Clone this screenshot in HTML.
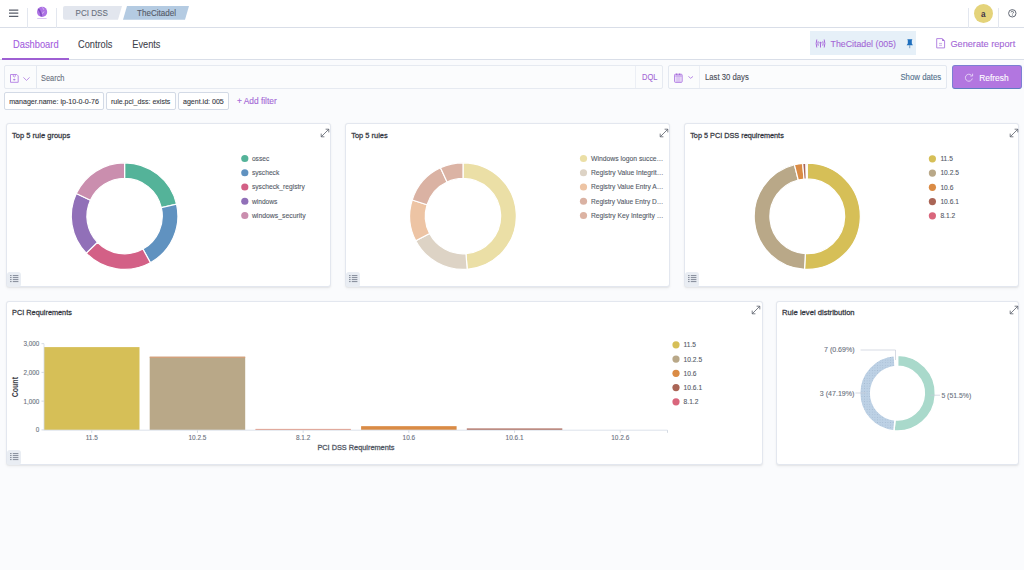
<!DOCTYPE html>
<html><head><meta charset="utf-8">
<style>
*{box-sizing:border-box;margin:0;padding:0}
html,body{width:1024px;height:570px;overflow:hidden;background:#fafbfd;font-family:"Liberation Sans", sans-serif;color:#343741}
.abs{position:absolute}
#hdr{position:absolute;left:0;top:0;width:1024px;height:28px;background:#fff;border-bottom:1px solid #d9dee8}
#tabs{position:absolute;left:0;top:28px;width:1024px;height:32px;background:#fff;border-bottom:1px solid #d9dee8}
.panel{position:absolute;background:#fff;border:1px solid #e3e7ef;border-radius:3px;box-shadow:0 0.6px 1.2px rgba(0,0,0,0.05),0 1.5px 3px rgba(0,0,0,0.04)}
.lbtn{position:absolute;width:14.5px;height:14.5px;background:#e9edf3;border-radius:3px}
.pill{position:absolute;top:92px;height:18px;background:#fff;border:1px solid #d3dae6;border-radius:2px}
svg{overflow:visible}
#ov{position:absolute;left:0;top:0}
#ov text{font-family:"Liberation Sans", sans-serif}
</style></head><body>
<div id="hdr">
  <svg class="abs" style="left:8.8px;top:8.6px" width="10" height="9" viewBox="0 0 10 9"><path d="M0 1h9.3M0 4.2h9.3M0 7.3h9.3" stroke="#5a5f6b" stroke-width="1.25"/></svg>
  <div class="abs" style="left:27px;top:8px;width:1px;height:20px;background:#e3e7ef"></div>
  <svg class="abs" style="left:36px;top:6px" width="12" height="14" viewBox="0 0 12 14"><circle cx="6.1" cy="5.9" r="5.1" fill="#ad72e4"/><path d="M2.2 3.2q1.5 1.2 2.4 3.5t0.4 3.5" stroke="#7f4cc0" stroke-width="1.6" fill="none"/><path d="M6.3 1.5q1.2 0.8 1.5 2.2M8 5.5q-0.5 1.5 -2 2" stroke="#d9c2f3" stroke-width="0.9" fill="none"/><rect x="1.2" y="12.1" width="9.4" height="0.8" fill="#d2b8f0"/></svg>
  <div class="abs" style="left:56px;top:8px;width:1px;height:20px;background:#e3e7ef"></div>
  <svg class="abs" style="left:62px;top:6px" width="130" height="14" viewBox="0 0 130 14"><path d="M3 0H60L56 13.8H3A2 2 0 0 1 1 11.8V2A2 2 0 0 1 3 0Z" fill="#e2e6ee"/><path d="M65 0H127L123 13.8H61Z" fill="#b4cbe2"/></svg>
  <div class="abs" style="left:968px;top:8px;width:1px;height:20px;background:#e3e7ef"></div>
  <div class="abs" style="left:973.8px;top:3.6px;width:19px;height:19px;border-radius:50%;background:#e4d37a"></div>
  <div class="abs" style="left:997.5px;top:8px;width:1px;height:20px;background:#e3e7ef"></div>
  <svg class="abs" style="left:1007.5px;top:8.7px" width="9" height="9" viewBox="0 0 9 9"><circle cx="4.3" cy="4.3" r="3.7" fill="none" stroke="#535966" stroke-width="0.9"/><path d="M3.1 3.4a1.2 1.2 0 1 1 1.7 1.1c-.4.2-.5.5-.5.9" fill="none" stroke="#535966" stroke-width="0.8"/><circle cx="4.3" cy="6.5" r="0.45" fill="#535966"/></svg>
</div>
<div id="tabs">
  <div class="abs" style="left:2px;top:30px;width:67px;height:2px;background:#9e5fd3"></div>
  <div class="abs" style="left:810px;top:3px;width:106px;height:24px;background:#e6f0f8"></div>
  <svg class="abs" style="left:814.5px;top:10.5px" width="11" height="9" viewBox="0 0 11 9"><path d="M1.8 0.5q-1.3 4 0 8M3.2 2.3q-0.6 2.2 0 4.4M9.2 0.5q1.3 4 0 8M7.8 2.3q0.6 2.2 0 4.4M5.5 4.5v4" stroke="#a86cdb" stroke-width="1" fill="none"/><circle cx="5.5" cy="3.8" r="1.1" fill="#a86cdb"/></svg>
  <svg class="abs" style="left:906px;top:10.5px" width="8" height="10" viewBox="0 0 8 10"><path d="M1.3 0.3H6.4L5.8 1.6V4.6L6.9 6.3H0.6L1.8 4.6V1.6Z" fill="#1f6fbd"/><path d="M3.75 6.2v3" stroke="#5b86b3" stroke-width="0.8"/></svg>
  <svg class="abs" style="left:936px;top:10px" width="10" height="11" viewBox="0 0 10 11"><path d="M0.7 0.6H6.3L8.6 2.9V9.9H0.7Z" fill="none" stroke="#b07fe0" stroke-width="0.95"/><path d="M6.2 0.6L8.6 3H6.2Z" fill="#a366d6"/><path d="M3 5.4h3M3 7.3h3" stroke="#b58ae0" stroke-width="0.7"/></svg>
</div>
<div class="abs" style="left:4px;top:65px;width:659px;height:24px;background:#fbfcfd;border:1px solid #e6eaf1;border-radius:2px"></div>
<div class="abs" style="left:36px;top:66px;width:1px;height:22px;background:#e3e8f0"></div>
<svg class="abs" style="left:10.2px;top:74px" width="9" height="9" viewBox="0 0 9 9"><path d="M0.5 0.5H6.8L8.2 1.9V8.3H0.5Z" fill="none" stroke="#b27fe3" stroke-width="0.9"/><path d="M3.3 0.6V2.4Q4.3 3.6 5.3 2.4V0.6" fill="none" stroke="#b27fe3" stroke-width="0.8"/><ellipse cx="4.3" cy="5.6" rx="1.2" ry="0.9" fill="#b27fe3"/></svg>
<svg class="abs" style="left:23.2px;top:76.8px" width="7" height="4" viewBox="0 0 7 4"><path d="M0.4 0.4L3.5 3.4L6.6 0.4" fill="none" stroke="#b27fe3" stroke-width="0.85"/></svg>
<div class="abs" style="left:635px;top:66px;width:1px;height:22px;background:#eceff5"></div>
<div class="abs" style="left:668px;top:65px;width:279px;height:24px;background:#fbfcfd;border:1px solid #e3e8f0;border-radius:2px"></div>
<div class="abs" style="left:699px;top:66px;width:1px;height:22px;background:#eceff5"></div>
<svg class="abs" style="left:674px;top:73px" width="9" height="10" viewBox="0 0 9 10"><rect x="0.5" y="1.2" width="7.7" height="8.2" rx="1" fill="#dcc6f2" stroke="#b27fe3" stroke-width="0.9"/><path d="M1.6 3h5.5" stroke="#b27fe3" stroke-width="0.6"/><path d="M1.7 4v4.5M7 4v4.5" stroke="#f3ecfb" stroke-width="0.8"/><circle cx="2.6" cy="1.3" r="0.75" fill="#a366d6"/><circle cx="5.6" cy="1.3" r="0.75" fill="#a366d6"/></svg>
<svg class="abs" style="left:687.8px;top:75.8px" width="6" height="3" viewBox="0 0 6 3"><path d="M0.4 0.4L2.7 2.3L5 0.4" fill="none" stroke="#b27fe3" stroke-width="0.9"/></svg>
<div class="abs" style="left:952px;top:65px;width:69.5px;height:24px;background:#b276e0;border:1px solid #7b7fd2;border-bottom-color:#5f7dc2;border-radius:3px"></div>
<svg class="abs" style="left:965px;top:72.8px" width="8" height="9" viewBox="0 0 8 9"><path d="M6.4 2.3A3.5 3.5 0 1 0 7.3 5.5" fill="none" stroke="#e3d0f5" stroke-width="1"/><path d="M7.6 0.7V3H5.3" fill="none" stroke="#e3d0f5" stroke-width="1"/></svg>
<div class="pill" style="left:4px;width:100px"></div>
<div class="pill" style="left:106px;width:70px"></div>
<div class="pill" style="left:178px;width:51px"></div>
<div class="panel" style="left:6px;top:123px;width:325px;height:164px"></div>
<div class="panel" style="left:345px;top:123px;width:325px;height:164px"></div>
<div class="panel" style="left:684px;top:123px;width:335px;height:164px"></div>
<div class="panel" style="left:6px;top:301px;width:757px;height:164px"></div>
<div class="panel" style="left:776px;top:301px;width:243px;height:164px"></div>
<svg class="abs" style="left:320px;top:128px" width="10" height="10" viewBox="0 0 10 10"><path d="M1.2 8.8L8.8 1.2M5.6 1.2H8.8V4.4M1.2 5.6V8.8H4.4" fill="none" stroke="#5a606b" stroke-width="0.8"/></svg><svg class="abs" style="left:659px;top:128px" width="10" height="10" viewBox="0 0 10 10"><path d="M1.2 8.8L8.8 1.2M5.6 1.2H8.8V4.4M1.2 5.6V8.8H4.4" fill="none" stroke="#5a606b" stroke-width="0.8"/></svg><svg class="abs" style="left:1008.5px;top:128px" width="10" height="10" viewBox="0 0 10 10"><path d="M1.2 8.8L8.8 1.2M5.6 1.2H8.8V4.4M1.2 5.6V8.8H4.4" fill="none" stroke="#5a606b" stroke-width="0.8"/></svg><svg class="abs" style="left:751px;top:305px" width="10" height="10" viewBox="0 0 10 10"><path d="M1.2 8.8L8.8 1.2M5.6 1.2H8.8V4.4M1.2 5.6V8.8H4.4" fill="none" stroke="#5a606b" stroke-width="0.8"/></svg><svg class="abs" style="left:1008.5px;top:305px" width="10" height="10" viewBox="0 0 10 10"><path d="M1.2 8.8L8.8 1.2M5.6 1.2H8.8V4.4M1.2 5.6V8.8H4.4" fill="none" stroke="#5a606b" stroke-width="0.8"/></svg>
<div class="lbtn" style="left:6.5px;top:272px"><svg width="9" height="8" viewBox="0 0 9 8" style="position:absolute;left:3.3px;top:3.2px"><path d="M0 0.6h1.6M0 2.6h1.6M0 4.6h1.6M0 6.6h1.6M2.8 0.6h5.6M2.8 2.6h5.6M2.8 4.6h5.6M2.8 6.6h5.6" stroke="#7d8491" stroke-width="0.95"/></svg></div><div class="lbtn" style="left:345.5px;top:272px"><svg width="9" height="8" viewBox="0 0 9 8" style="position:absolute;left:3.3px;top:3.2px"><path d="M0 0.6h1.6M0 2.6h1.6M0 4.6h1.6M0 6.6h1.6M2.8 0.6h5.6M2.8 2.6h5.6M2.8 4.6h5.6M2.8 6.6h5.6" stroke="#7d8491" stroke-width="0.95"/></svg></div><div class="lbtn" style="left:684.5px;top:272px"><svg width="9" height="8" viewBox="0 0 9 8" style="position:absolute;left:3.3px;top:3.2px"><path d="M0 0.6h1.6M0 2.6h1.6M0 4.6h1.6M0 6.6h1.6M2.8 0.6h5.6M2.8 2.6h5.6M2.8 4.6h5.6M2.8 6.6h5.6" stroke="#7d8491" stroke-width="0.95"/></svg></div><div class="lbtn" style="left:6.5px;top:450px"><svg width="9" height="8" viewBox="0 0 9 8" style="position:absolute;left:3.3px;top:3.2px"><path d="M0 0.6h1.6M0 2.6h1.6M0 4.6h1.6M0 6.6h1.6M2.8 0.6h5.6M2.8 2.6h5.6M2.8 4.6h5.6M2.8 6.6h5.6" stroke="#7d8491" stroke-width="0.95"/></svg></div>
<svg id="ov" width="1024" height="570">
<defs><pattern id="dots" width="2.6" height="2.6" patternUnits="userSpaceOnUse"><rect width="2.6" height="2.6" fill="#bdd1e5"/><circle cx="1.3" cy="1.3" r="0.5" fill="#a3b9d0"/></pattern></defs>
<path d="M124.60 162.80A53.30 53.30 0 0 1 176.53 204.11L161.33 207.62A37.70 37.70 0 0 0 124.60 178.40Z" fill="#54b399" stroke="#fff" stroke-width="1.2"/><path d="M176.53 204.11A53.30 53.30 0 0 1 150.44 262.72L142.88 249.07A37.70 37.70 0 0 0 161.33 207.62Z" fill="#6092c0" stroke="#fff" stroke-width="1.2"/><path d="M150.44 262.72A53.30 53.30 0 0 1 86.26 253.13L97.48 242.29A37.70 37.70 0 0 0 142.88 249.07Z" fill="#d36086" stroke="#fff" stroke-width="1.2"/><path d="M86.26 253.13A53.30 53.30 0 0 1 76.29 193.57L90.43 200.17A37.70 37.70 0 0 0 97.48 242.29Z" fill="#9170b8" stroke="#fff" stroke-width="1.2"/><path d="M76.29 193.57A53.30 53.30 0 0 1 124.60 162.80L124.60 178.40A37.70 37.70 0 0 0 90.43 200.17Z" fill="#ca8eae" stroke="#fff" stroke-width="1.2"/><path d="M463.00 162.80A53.30 53.30 0 0 1 467.18 269.24L465.96 253.68A37.70 37.70 0 0 0 463.00 178.40Z" fill="#ebdfa6" stroke="#fff" stroke-width="1.2"/><path d="M467.18 269.24A53.30 53.30 0 0 1 415.77 240.79L429.59 233.57A37.70 37.70 0 0 0 465.96 253.68Z" fill="#ddd3c5" stroke="#fff" stroke-width="1.2"/><path d="M415.77 240.79A53.30 53.30 0 0 1 412.19 199.98L427.06 204.70A37.70 37.70 0 0 0 429.59 233.57Z" fill="#edc4a4" stroke="#fff" stroke-width="1.2"/><path d="M412.19 199.98A53.30 53.30 0 0 1 440.47 167.79L447.07 181.93A37.70 37.70 0 0 0 427.06 204.70Z" fill="#dab2a3" stroke="#fff" stroke-width="1.2"/><path d="M440.47 167.79A53.30 53.30 0 0 1 463.00 162.80L463.00 178.40A37.70 37.70 0 0 0 447.07 181.93Z" fill="#dbb3a4" stroke="#fff" stroke-width="1.2"/><path d="M807.30 163.20A53.10 53.10 0 1 1 804.52 269.33L805.34 253.65A37.40 37.40 0 1 0 807.30 178.90Z" fill="#d6bf57" stroke="#fff" stroke-width="1.2"/><path d="M804.52 269.33A53.10 53.10 0 0 1 794.45 164.78L798.25 180.01A37.40 37.40 0 0 0 805.34 253.65Z" fill="#b9a888" stroke="#fff" stroke-width="1.2"/><path d="M794.45 164.78A53.10 53.10 0 0 1 802.67 163.40L804.04 179.04A37.40 37.40 0 0 0 798.25 180.01Z" fill="#da8b45" stroke="#fff" stroke-width="1.2"/><path d="M802.67 163.40A53.10 53.10 0 0 1 806.00 163.22L806.39 178.91A37.40 37.40 0 0 0 804.04 179.04Z" fill="#aa6556" stroke="#fff" stroke-width="1.2"/><path d="M806.00 163.22A53.10 53.10 0 0 1 807.30 163.20L807.30 178.90A37.40 37.40 0 0 0 806.39 178.91Z" fill="#d9667c" stroke="#fff" stroke-width="1.2"/><path d="M897.50 355.35A37.85 37.85 0 1 1 893.94 430.88L894.97 419.93A26.85 26.85 0 1 0 897.50 366.35Z" fill="#a9d9cb" stroke="#fff" stroke-width="1.5"/><path d="M893.94 430.88A37.85 37.85 0 0 1 894.40 355.48L895.30 366.44A26.85 26.85 0 0 0 894.97 419.93Z" fill="url(#dots)" stroke="#fff" stroke-width="1.5"/><path d="M894.40 355.48A37.85 37.85 0 0 1 897.50 355.35L897.50 366.35A26.85 26.85 0 0 0 895.30 366.44Z" fill="#ffffff" stroke="#fff" stroke-width="1.5"/>
<rect x="44.00" y="347.10" width="95.5" height="82.80" fill="#d6bf57"/><line x1="91.75" y1="430.2" x2="91.75" y2="432.8" stroke="#c9d0db" stroke-width="0.8"/><rect x="149.70" y="356.73" width="95.5" height="73.17" fill="#b9a888"/><rect x="149.70" y="356.73" width="95.5" height="1" fill="#de9f78"/><line x1="197.45" y1="430.2" x2="197.45" y2="432.8" stroke="#c9d0db" stroke-width="0.8"/><rect x="255.40" y="428.90" width="95.5" height="1.00" fill="#e3907a"/><line x1="303.15" y1="430.2" x2="303.15" y2="432.8" stroke="#c9d0db" stroke-width="0.8"/><rect x="361.10" y="426.16" width="95.5" height="3.74" fill="#da8b45"/><line x1="408.85" y1="430.2" x2="408.85" y2="432.8" stroke="#c9d0db" stroke-width="0.8"/><rect x="466.80" y="428.46" width="95.5" height="1.44" fill="#aa6556"/><line x1="514.55" y1="430.2" x2="514.55" y2="432.8" stroke="#c9d0db" stroke-width="0.8"/><line x1="620.25" y1="430.2" x2="620.25" y2="432.8" stroke="#c9d0db" stroke-width="0.8"/><line x1="41.5" y1="429.90" x2="44" y2="429.90" stroke="#c9d0db" stroke-width="0.8"/><line x1="41.5" y1="401.15" x2="44" y2="401.15" stroke="#c9d0db" stroke-width="0.8"/><line x1="41.5" y1="372.40" x2="44" y2="372.40" stroke="#c9d0db" stroke-width="0.8"/><line x1="41.5" y1="343.65" x2="44" y2="343.65" stroke="#c9d0db" stroke-width="0.8"/><line x1="44" y1="343.7" x2="44" y2="430.2" stroke="#d3dae6" stroke-width="0.8"/><line x1="44" y1="430.2" x2="667.5" y2="430.2" stroke="#d3dae6" stroke-width="0.8"/><line x1="667.5" y1="430.2" x2="667.5" y2="432.8" stroke="#c9d0db" stroke-width="0.8"/>
<path d="M860.6 350H895.5V360" fill="none" stroke="#c5ccd8" stroke-width="0.7"/>
<path d="M855.4 393H866" fill="none" stroke="#c5ccd8" stroke-width="0.7"/>
<path d="M930.6 395.2H940" fill="none" stroke="#c5ccd8" stroke-width="0.7"/>
<circle cx="244.8" cy="158.50" r="3.6" fill="#54b399"/><circle cx="244.8" cy="172.75" r="3.6" fill="#6092c0"/><circle cx="244.8" cy="187.00" r="3.6" fill="#d36086"/><circle cx="244.8" cy="201.25" r="3.6" fill="#9170b8"/><circle cx="244.8" cy="215.50" r="3.6" fill="#ca8eae"/><circle cx="583.5" cy="158.50" r="3.6" fill="#ebdfa6"/><circle cx="583.5" cy="172.75" r="3.6" fill="#ddd3c5"/><circle cx="583.5" cy="187.00" r="3.6" fill="#edc4a4"/><circle cx="583.5" cy="201.25" r="3.6" fill="#dab2a3"/><circle cx="583.5" cy="215.50" r="3.6" fill="#dcb3a3"/><circle cx="932.4" cy="158.80" r="3.6" fill="#d6bf57"/><circle cx="932.4" cy="173.05" r="3.6" fill="#b9a888"/><circle cx="932.4" cy="187.30" r="3.6" fill="#da8b45"/><circle cx="932.4" cy="201.55" r="3.6" fill="#aa6556"/><circle cx="932.4" cy="215.80" r="3.6" fill="#d9667c"/><circle cx="676.0" cy="344.80" r="3.6" fill="#d6bf57"/><circle cx="676.0" cy="359.05" r="3.6" fill="#b9a888"/><circle cx="676.0" cy="373.30" r="3.6" fill="#da8b45"/><circle cx="676.0" cy="387.55" r="3.6" fill="#aa6556"/><circle cx="676.0" cy="401.80" r="3.6" fill="#d9667c"/>
<text x="251.90" y="160.90" font-size="7.0" fill="#535966" textLength="17.37" lengthAdjust="spacingAndGlyphs" stroke="#535966" stroke-width="0.1">ossec</text><text x="251.90" y="175.15" font-size="7.0" fill="#535966" textLength="27.35" lengthAdjust="spacingAndGlyphs" stroke="#535966" stroke-width="0.1">syscheck</text><text x="251.90" y="189.40" font-size="7.0" fill="#535966" textLength="53.00" lengthAdjust="spacingAndGlyphs" stroke="#535966" stroke-width="0.1">syscheck_registry</text><text x="251.91" y="203.65" font-size="7.0" fill="#535966" textLength="25.50" lengthAdjust="spacingAndGlyphs" stroke="#535966" stroke-width="0.1">windows</text><text x="251.91" y="217.90" font-size="7.0" fill="#535966" textLength="53.69" lengthAdjust="spacingAndGlyphs" stroke="#535966" stroke-width="0.1">windows_security</text><text x="591.00" y="160.90" font-size="7.0" fill="#535966" textLength="72.40" lengthAdjust="spacingAndGlyphs" stroke="#535966" stroke-width="0.1">Windows logon succe…</text><text x="591.00" y="175.15" font-size="7.0" fill="#535966" textLength="72.40" lengthAdjust="spacingAndGlyphs" stroke="#535966" stroke-width="0.1">Registry Value Integrit…</text><text x="591.00" y="189.40" font-size="7.0" fill="#535966" textLength="72.40" lengthAdjust="spacingAndGlyphs" stroke="#535966" stroke-width="0.1">Registry Value Entry A…</text><text x="591.00" y="203.65" font-size="7.0" fill="#535966" textLength="72.40" lengthAdjust="spacingAndGlyphs" stroke="#535966" stroke-width="0.1">Registry Value Entry D…</text><text x="591.00" y="217.90" font-size="7.0" fill="#535966" textLength="72.40" lengthAdjust="spacingAndGlyphs" stroke="#535966" stroke-width="0.1">Registry Key Integrity …</text><text x="940.40" y="161.20" font-size="7.0" fill="#535966" textLength="12.45" lengthAdjust="spacingAndGlyphs" stroke="#535966" stroke-width="0.1">11.5</text><text x="940.40" y="175.45" font-size="7.0" fill="#535966" textLength="18.49" lengthAdjust="spacingAndGlyphs" stroke="#535966" stroke-width="0.1">10.2.5</text><text x="940.40" y="189.70" font-size="7.0" fill="#535966" textLength="12.94" lengthAdjust="spacingAndGlyphs" stroke="#535966" stroke-width="0.1">10.6</text><text x="940.40" y="203.95" font-size="7.0" fill="#535966" textLength="18.49" lengthAdjust="spacingAndGlyphs" stroke="#535966" stroke-width="0.1">10.6.1</text><text x="940.40" y="218.20" font-size="7.0" fill="#535966" textLength="14.79" lengthAdjust="spacingAndGlyphs" stroke="#535966" stroke-width="0.1">8.1.2</text><text x="683.60" y="347.40" font-size="7.0" fill="#535966" textLength="12.45" lengthAdjust="spacingAndGlyphs" stroke="#535966" stroke-width="0.1">11.5</text><text x="683.60" y="361.65" font-size="7.0" fill="#535966" textLength="18.49" lengthAdjust="spacingAndGlyphs" stroke="#535966" stroke-width="0.1">10.2.5</text><text x="683.60" y="375.90" font-size="7.0" fill="#535966" textLength="12.94" lengthAdjust="spacingAndGlyphs" stroke="#535966" stroke-width="0.1">10.6</text><text x="683.60" y="390.15" font-size="7.0" fill="#535966" textLength="18.49" lengthAdjust="spacingAndGlyphs" stroke="#535966" stroke-width="0.1">10.6.1</text><text x="683.60" y="404.40" font-size="7.0" fill="#535966" textLength="14.79" lengthAdjust="spacingAndGlyphs" stroke="#535966" stroke-width="0.1">8.1.2</text><text x="85.70" y="440.00" font-size="6.8" fill="#69707d" textLength="12.09" lengthAdjust="spacingAndGlyphs" stroke="#69707d" stroke-width="0.1">11.5</text><text x="188.47" y="440.00" font-size="6.8" fill="#69707d" textLength="17.96" lengthAdjust="spacingAndGlyphs" stroke="#69707d" stroke-width="0.1">10.2.5</text><text x="295.97" y="440.00" font-size="6.8" fill="#69707d" textLength="14.37" lengthAdjust="spacingAndGlyphs" stroke="#69707d" stroke-width="0.1">8.1.2</text><text x="402.56" y="440.00" font-size="6.8" fill="#69707d" textLength="12.57" lengthAdjust="spacingAndGlyphs" stroke="#69707d" stroke-width="0.1">10.6</text><text x="505.57" y="440.00" font-size="6.8" fill="#69707d" textLength="17.96" lengthAdjust="spacingAndGlyphs" stroke="#69707d" stroke-width="0.1">10.6.1</text><text x="611.27" y="440.00" font-size="6.8" fill="#69707d" textLength="17.96" lengthAdjust="spacingAndGlyphs" stroke="#69707d" stroke-width="0.1">10.2.6</text><text x="35.78" y="432.35" font-size="6.8" fill="#69707d" textLength="3.52" lengthAdjust="spacingAndGlyphs" stroke="#69707d" stroke-width="0.1">0</text><text x="23.48" y="403.60" font-size="6.8" fill="#69707d" textLength="15.83" lengthAdjust="spacingAndGlyphs" stroke="#69707d" stroke-width="0.1">1,000</text><text x="23.48" y="374.85" font-size="6.8" fill="#69707d" textLength="15.83" lengthAdjust="spacingAndGlyphs" stroke="#69707d" stroke-width="0.1">2,000</text><text x="23.48" y="346.10" font-size="6.8" fill="#69707d" textLength="15.83" lengthAdjust="spacingAndGlyphs" stroke="#69707d" stroke-width="0.1">3,000</text><text x="75.60" y="15.90" font-size="8.6" fill="#69707d" textLength="32.20" lengthAdjust="spacingAndGlyphs" stroke="#69707d" stroke-width="0.1">PCI DSS</text><text x="137.00" y="16.00" font-size="8.6" fill="#535966" textLength="39.00" lengthAdjust="spacingAndGlyphs" stroke="#535966" stroke-width="0.1">TheCitadel</text><text x="981.00" y="16.60" font-size="9.0" fill="#3f3548" font-weight="bold" textLength="4.54" lengthAdjust="spacingAndGlyphs">a</text><text x="13.00" y="48.10" font-size="10.2" fill="#a45de0" textLength="45.60" lengthAdjust="spacingAndGlyphs" stroke="#a45de0" stroke-width="0.1">Dashboard</text><text x="78.00" y="48.10" font-size="10.2" fill="#3f434c" textLength="34.40" lengthAdjust="spacingAndGlyphs" stroke="#3f434c" stroke-width="0.1">Controls</text><text x="132.30" y="48.10" font-size="10.2" fill="#3f434c" textLength="28.10" lengthAdjust="spacingAndGlyphs" stroke="#3f434c" stroke-width="0.1">Events</text><text x="830.60" y="47.00" font-size="9.7" fill="#a366d6" textLength="65.40" lengthAdjust="spacingAndGlyphs" stroke="#a366d6" stroke-width="0.1">TheCitadel (005)</text><text x="950.40" y="46.80" font-size="9.0" fill="#a366d6" textLength="64.80" lengthAdjust="spacingAndGlyphs" stroke="#a366d6" stroke-width="0.1">Generate report</text><text x="41.00" y="81.00" font-size="8.3" fill="#69707d" textLength="23.50" lengthAdjust="spacingAndGlyphs" stroke="#69707d" stroke-width="0.1">Search</text><text x="642.00" y="80.10" font-size="8.3" fill="#a366d6" textLength="15.40" lengthAdjust="spacingAndGlyphs" stroke="#a366d6" stroke-width="0.1">DQL</text><text x="705.00" y="80.00" font-size="8.3" fill="#4a4e58" textLength="43.80" lengthAdjust="spacingAndGlyphs" stroke="#4a4e58" stroke-width="0.1">Last 30 days</text><text x="900.40" y="80.30" font-size="8.7" fill="#52708c" textLength="40.90" lengthAdjust="spacingAndGlyphs" stroke="#52708c" stroke-width="0.1">Show dates</text><text x="979.20" y="80.90" font-size="9.1" fill="#ffffff" textLength="29.40" lengthAdjust="spacingAndGlyphs" stroke="#ffffff" stroke-width="0.1">Refresh</text><text x="9.20" y="103.90" font-size="7.2" fill="#343741" textLength="89.80" lengthAdjust="spacingAndGlyphs" stroke="#343741" stroke-width="0.1">manager.name: ip-10-0-0-76</text><text x="110.90" y="103.90" font-size="7.2" fill="#343741" textLength="59.50" lengthAdjust="spacingAndGlyphs" stroke="#343741" stroke-width="0.1">rule.pci_dss: exists</text><text x="183.00" y="103.90" font-size="7.2" fill="#343741" textLength="40.80" lengthAdjust="spacingAndGlyphs" stroke="#343741" stroke-width="0.1">agent.id: 005</text><text x="236.90" y="104.00" font-size="8.2" fill="#a366d6" textLength="39.90" lengthAdjust="spacingAndGlyphs" stroke="#a366d6" stroke-width="0.1">+ Add filter</text><text x="12.10" y="137.70" font-size="7.8" fill="#343741" textLength="58.11" lengthAdjust="spacingAndGlyphs" stroke="#343741" stroke-width="0.26">Top 5 rule groups</text><text x="351.20" y="137.70" font-size="7.8" fill="#343741" textLength="36.51" lengthAdjust="spacingAndGlyphs" stroke="#343741" stroke-width="0.26">Top 5 rules</text><text x="690.20" y="137.70" font-size="7.8" fill="#343741" textLength="93.61" lengthAdjust="spacingAndGlyphs" stroke="#343741" stroke-width="0.26">Top 5 PCI DSS requirements</text><text x="12.10" y="315.20" font-size="7.8" fill="#343741" textLength="59.79" lengthAdjust="spacingAndGlyphs" stroke="#343741" stroke-width="0.26">PCI Requirements</text><text x="782.10" y="315.20" font-size="7.8" fill="#343741" textLength="72.52" lengthAdjust="spacingAndGlyphs" stroke="#343741" stroke-width="0.26">Rule level distribution</text><text x="317.40" y="450.20" font-size="7.6" fill="#535966" textLength="77.10" lengthAdjust="spacingAndGlyphs" stroke="#535966" stroke-width="0.3">PCI DSS Requirements</text><text x="824.00" y="352.40" font-size="7.4" fill="#69707d" textLength="30.60" lengthAdjust="spacingAndGlyphs" stroke="#69707d" stroke-width="0.1">7 (0.69%)</text><text x="819.80" y="395.60" font-size="7.4" fill="#69707d" textLength="34.60" lengthAdjust="spacingAndGlyphs" stroke="#69707d" stroke-width="0.1">3 (47.19%)</text><text x="941.40" y="397.80" font-size="7.4" fill="#69707d" textLength="29.80" lengthAdjust="spacingAndGlyphs" stroke="#69707d" stroke-width="0.1">5 (51.5%)</text>
<g transform="translate(18.1 397.3) rotate(-90)"><text x="-0.00" y="0" font-size="8.4" font-weight="bold" fill="#3a3d46" textLength="20.30" lengthAdjust="spacingAndGlyphs">Count</text></g>
</svg>
</body></html>
